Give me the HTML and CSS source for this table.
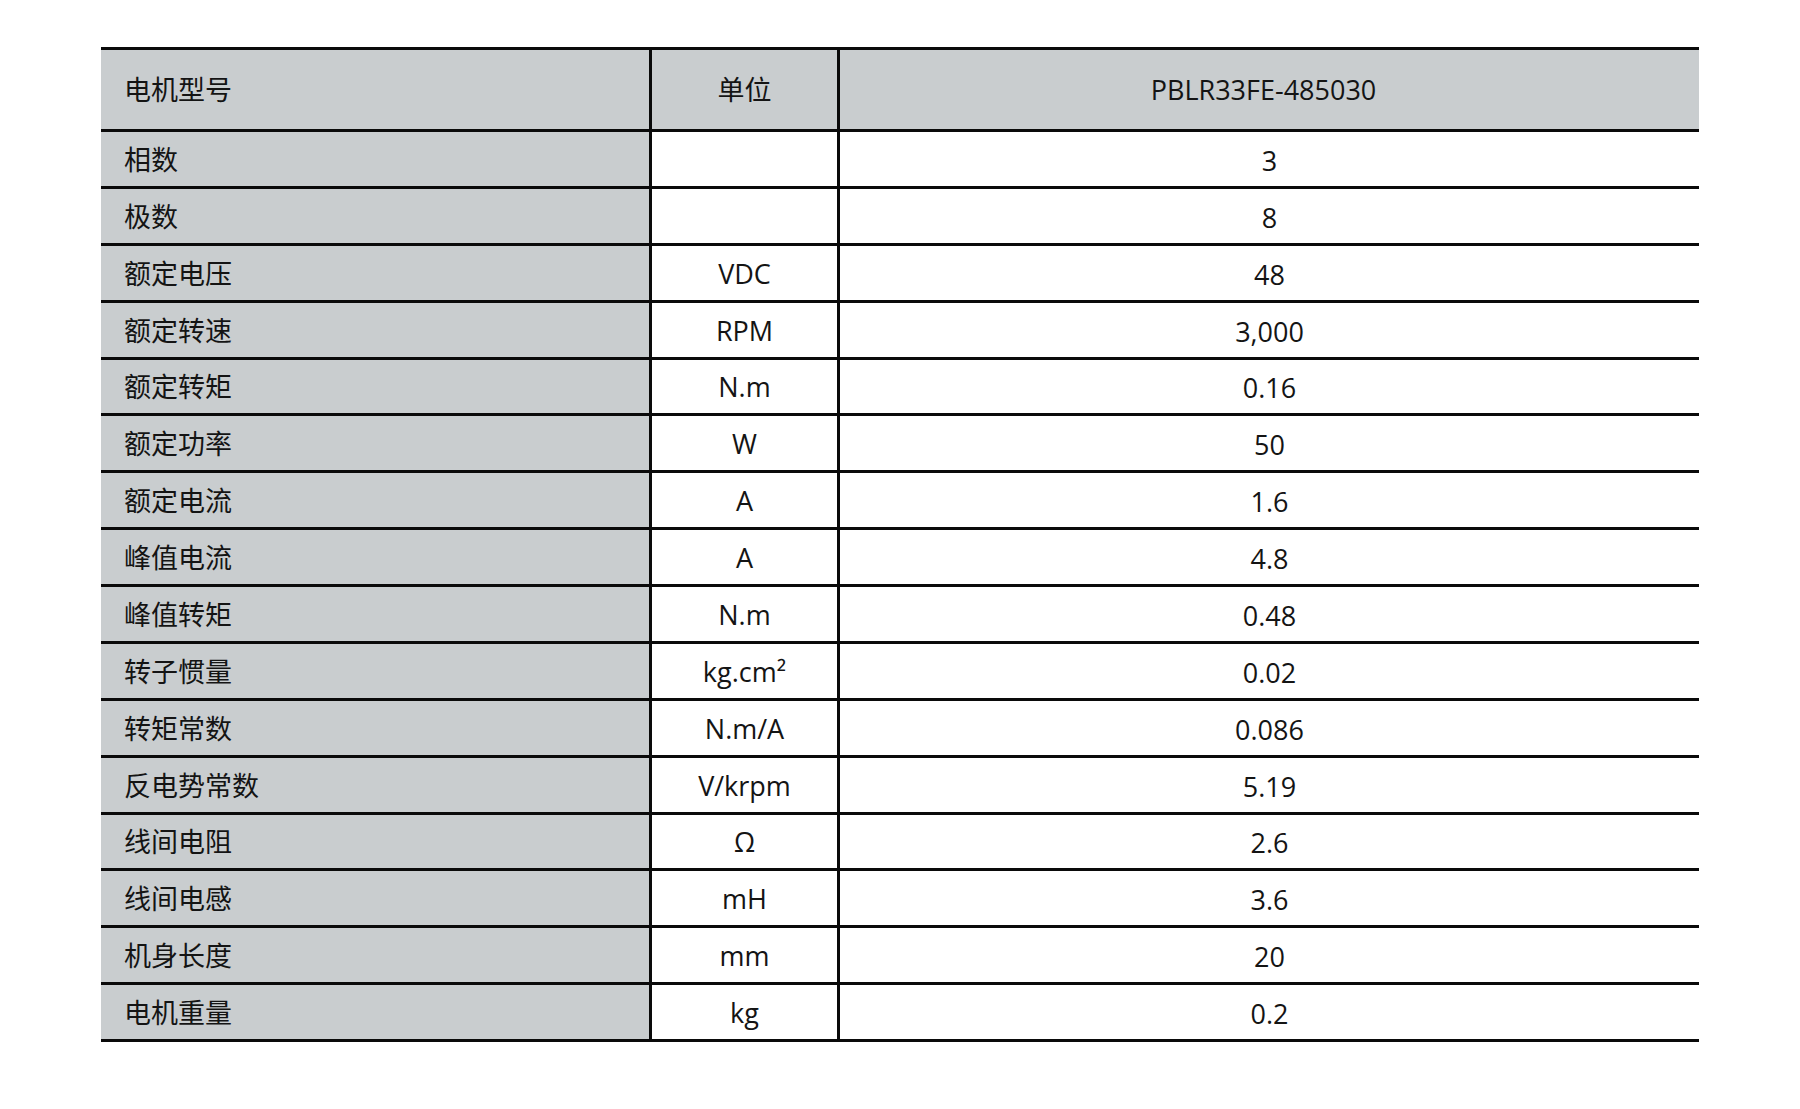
FILE: index.html
```html
<!DOCTYPE html>
<html lang="zh-CN">
<head>
<meta charset="utf-8">
<title>PBLR33FE-485030</title>
<link rel="stylesheet" href="styles.css">
</head>
<body>
<div class="page">
  <div class="spec">
    <div class="row head">
      <div class="cell name">电机型号</div>
      <div class="cell unit">单位</div>
      <div class="cell val">PBLR33FE-485030</div>
    </div>
    <div class="row"><div class="cell name">相数</div><div class="cell unit"></div><div class="cell val">3</div></div>
    <div class="row"><div class="cell name">极数</div><div class="cell unit"></div><div class="cell val">8</div></div>
    <div class="row"><div class="cell name">额定电压</div><div class="cell unit">VDC</div><div class="cell val">48</div></div>
    <div class="row"><div class="cell name">额定转速</div><div class="cell unit">RPM</div><div class="cell val">3,000</div></div>
    <div class="row"><div class="cell name">额定转矩</div><div class="cell unit">N.m</div><div class="cell val">0.16</div></div>
    <div class="row"><div class="cell name">额定功率</div><div class="cell unit">W</div><div class="cell val">50</div></div>
    <div class="row"><div class="cell name">额定电流</div><div class="cell unit">A</div><div class="cell val">1.6</div></div>
    <div class="row"><div class="cell name">峰值电流</div><div class="cell unit">A</div><div class="cell val">4.8</div></div>
    <div class="row"><div class="cell name">峰值转矩</div><div class="cell unit">N.m</div><div class="cell val">0.48</div></div>
    <div class="row"><div class="cell name">转子惯量</div><div class="cell unit">kg.cm²</div><div class="cell val">0.02</div></div>
    <div class="row"><div class="cell name">转矩常数</div><div class="cell unit">N.m/A</div><div class="cell val">0.086</div></div>
    <div class="row"><div class="cell name">反电势常数</div><div class="cell unit">V/krpm</div><div class="cell val">5.19</div></div>
    <div class="row"><div class="cell name">线间电阻</div><div class="cell unit">Ω</div><div class="cell val">2.6</div></div>
    <div class="row"><div class="cell name">线间电感</div><div class="cell unit">mH</div><div class="cell val">3.6</div></div>
    <div class="row"><div class="cell name">机身长度</div><div class="cell unit">mm</div><div class="cell val">20</div></div>
    <div class="row"><div class="cell name">电机重量</div><div class="cell unit">kg</div><div class="cell val">0.2</div></div>
  </div>
</div>
</body>
</html>
```
FILE: styles.css
```css
html, body {
  margin: 0;
  padding: 0;
  background: #ffffff;
}

.page {
  padding: 47px 0 0 101px;
  font-family: "Open Sans", "Noto Sans CJK SC", sans-serif;
  font-size: 27px;
  color: #141414;
}

.spec {
  width: 1598px;
  border-top: 3px solid #0a0a0a;
}

.row {
  display: grid;
  grid-template-columns: 548px 188px 862px;
  height: 53.875px;
  border-bottom: 3px solid #0a0a0a;
}

.row.head {
  height: 79px;
  background: #c9cdcf;
}

.cell {
  display: flex;
  align-items: center;
  justify-content: center;
  line-height: 1;
  white-space: nowrap;
  padding-top: 1px;
}

.cell.name {
  justify-content: flex-start;
  padding-left: 23px;
  background: #c9cdcf;
}

.cell.unit,
.cell.val {
  border-left: 3px solid #0a0a0a;
}

.row .cell.val {
  padding-top: 3px;
}

.row.head .cell {
  padding-top: 0;
}

.row.head .cell.val {
  padding-right: 12px;
}
```
